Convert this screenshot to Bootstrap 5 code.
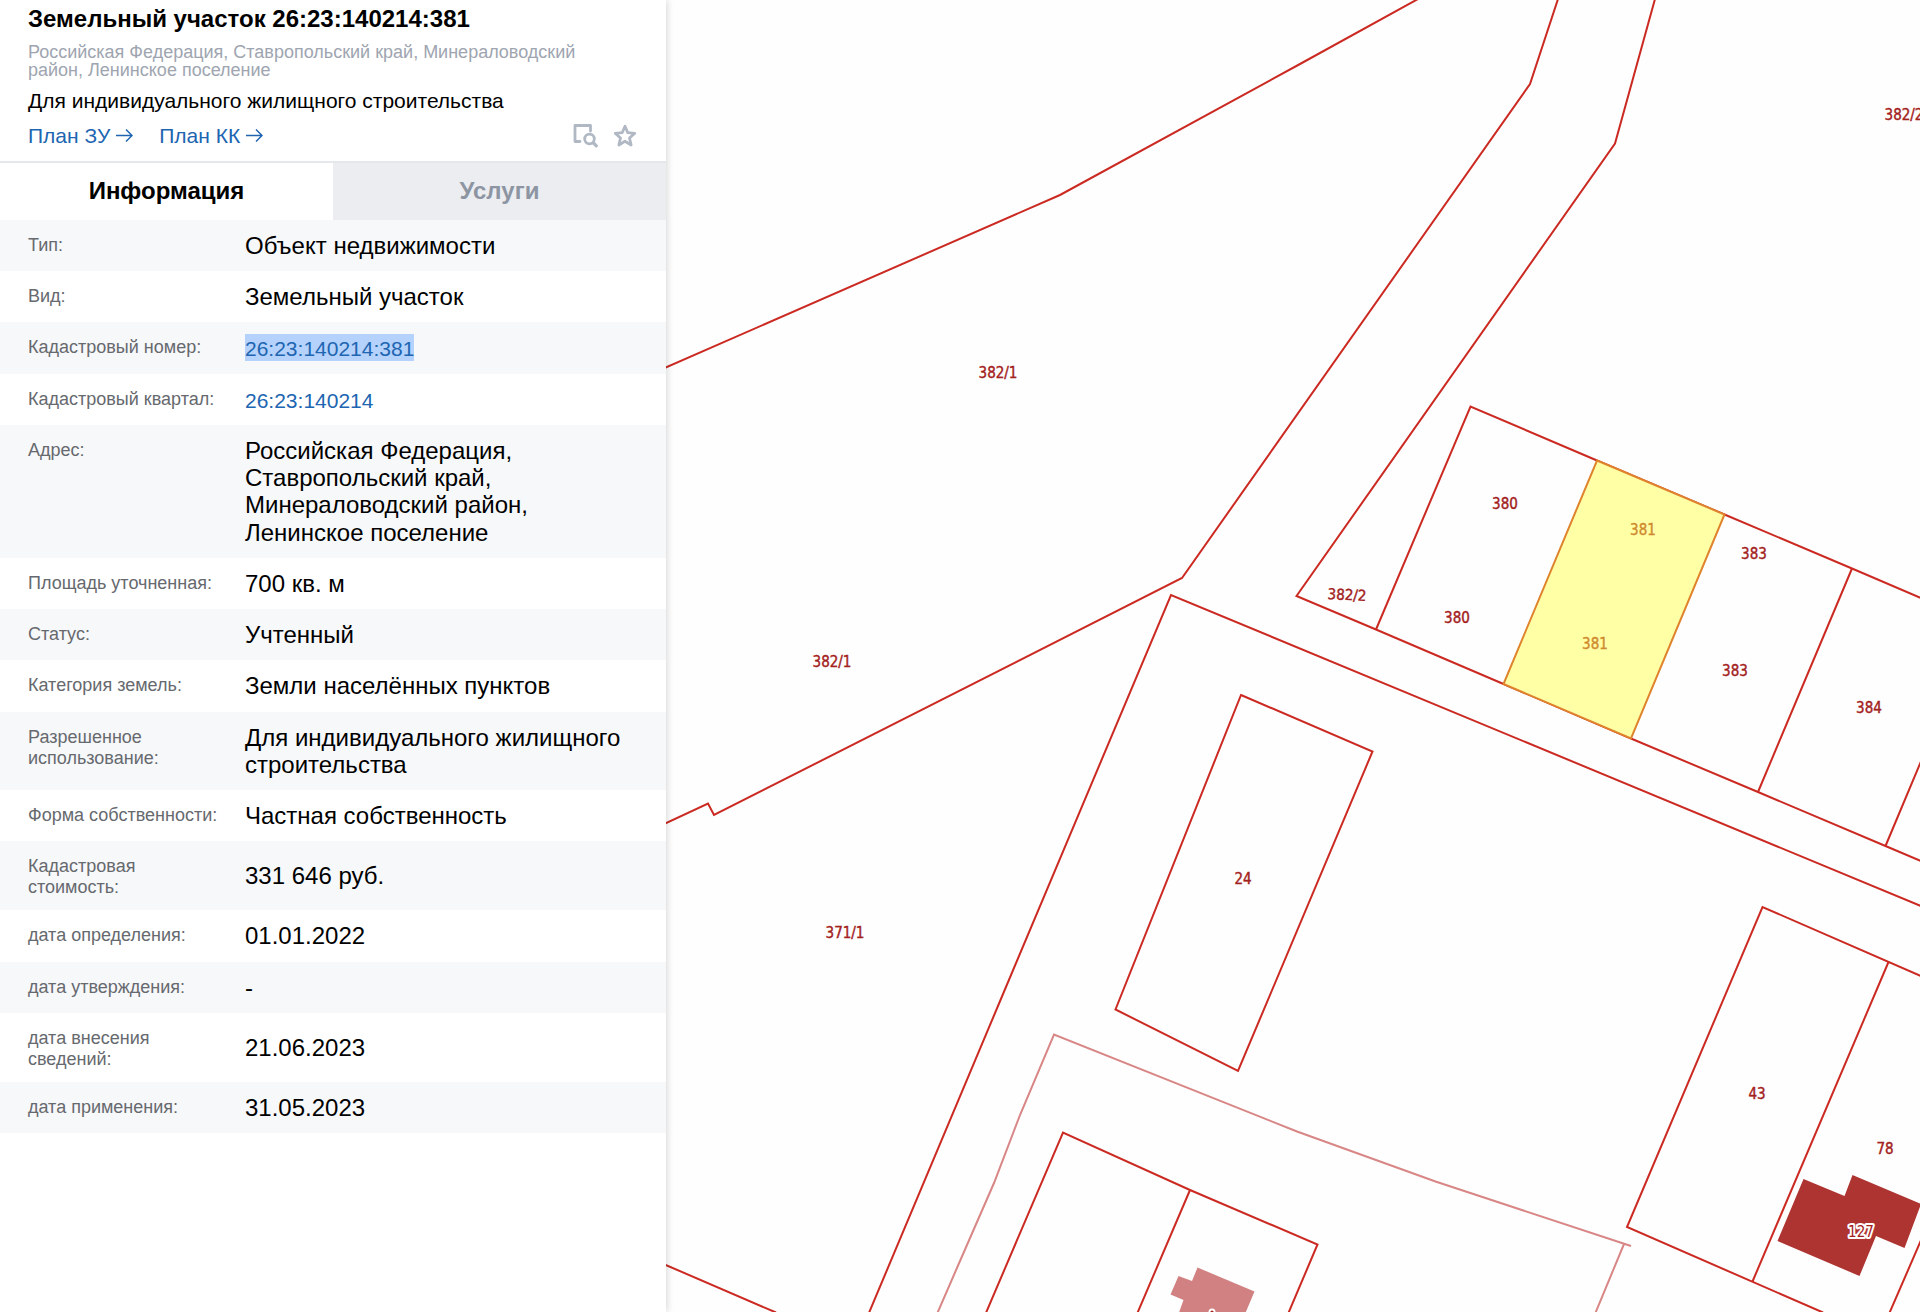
<!DOCTYPE html>
<html lang="ru">
<head>
<meta charset="utf-8">
<meta name="viewport" content="width=device-width, initial-scale=1">
<title>Земельный участок 26:23:140214:381</title>
<link href="https://cdn.jsdelivr.net/npm/bootstrap@5.3.0/dist/css/bootstrap.min.css" rel="stylesheet">
<style>
  body { font-family: "Liberation Sans", Arial, sans-serif; color: #000; background: #fefefe; }
  .info-panel { flex: 0 0 666px; background: #fff; box-shadow: 0 0 8px rgba(0, 0, 0, .2); z-index: 1; }
  .panel-head { padding: 5px 28px 12px; border-bottom: 2px solid #e4e7eb; }
  .panel-title { font-size: 24px; line-height: 28px; margin: 0 0 10px; }
  .panel-address { font-size: 18px; line-height: 18px; color: #9ea5b0; margin: 0 0 9px; padding-right: 40px; }
  .panel-usage { font-size: 21px; line-height: 26px; margin: 0 0 9px; }
  .panel-links { font-size: 21px; line-height: 26px; gap: 26px; }
  .panel-links a, .params a { color: #2065b1; text-decoration: none; }
  .panel-links a { display: flex; align-items: center; gap: 6px; }
  .panel-icons { gap: 15px; padding-right: 1px; color: #b0b8c4; }
  .panel-icons button { color: inherit; line-height: 0; }
  .panel-tabs button { flex: 1 1 50%; border: 0; background: #ebedf1; color: #8d95a3; font-weight: 700; font-size: 24px; line-height: 28px; padding: 14px 0 15px; }
  .panel-tabs button.active { background: #fff; color: #000; }
  .params { width: 100%; table-layout: fixed; }
  .params tr:nth-child(odd) { background: #f7f8fa; }
  .params th { width: 245px; padding: 15px 20px 12px 28px; font-weight: 400; font-size: 18px; line-height: 21px; color: #66696e; vertical-align: top; }
  .params td { padding: 12px 28px 12px 0; font-size: 24px; line-height: 1.135; vertical-align: middle; }
  .params a { font-size: 21px; }
  .params .picked { background: #b4d2fb; padding: 3px 0 1px; }
  .map-area { flex: 1 1 0; min-width: 0; overflow: hidden; }
  .map-area svg { display: block; width: 100%; height: 100%; }
  .bound { fill: none; stroke: #cb2a22; stroke-width: 2; }
  .faint { fill: none; stroke: #d98686; stroke-width: 2; }
  .num { font-family: "DejaVu Sans Condensed", "DejaVu Sans", sans-serif; font-size: 15px; fill: #a3211c; stroke: #a3211c; stroke-width: .4; text-anchor: middle; }
  .num-picked { fill: #cf8a2e; stroke: #cf8a2e; }
  .num-building { stroke: #fff; stroke-width: 4; stroke-linejoin: round; paint-order: stroke; }
</style>
<script src="https://cdn.jsdelivr.net/npm/bootstrap@5.3.0/dist/js/bootstrap.bundle.min.js"></script>
</head>
<body>
<div class="d-flex vh-100 overflow-hidden">
  <aside class="info-panel position-relative">
    <header class="panel-head">
      <h1 class="panel-title fw-bold">Земельный участок 26:23:140214:381</h1>
      <p class="panel-address">Российская Федерация, Ставропольский край, Минераловодский район, Ленинское поселение</p>
      <p class="panel-usage">Для индивидуального жилищного строительства</p>
      <div class="panel-links d-flex align-items-center">
        <a href="#">План ЗУ <svg width="17" height="16" viewBox="0 0 17 16" fill="none" stroke="currentColor" stroke-width="1.5"><path d="M0 7.500H16M10 1.500L16 7.500L10 13.500"/></svg></a>
        <a href="#">План КК <svg width="17" height="16" viewBox="0 0 17 16" fill="none" stroke="currentColor" stroke-width="1.5"><path d="M0 7.500H16M10 1.500L16 7.500L10 13.500"/></svg></a>
        <div class="panel-icons d-flex align-items-center ms-auto">
          <button type="button" class="btn p-0 border-0" aria-label="Поиск по участку"><svg width="25" height="24" viewBox="0 0 25 24" fill="none" stroke="currentColor" stroke-width="2.800" stroke-linecap="round" stroke-linejoin="round"><path d="M7 17.500H2V1.500H17.500V7"/><circle cx="16.500" cy="15" r="4.800" stroke-width="2.800"/><path d="M20.500 19L23.300 21.800" stroke-width="3.200"/></svg></button>
          <button type="button" class="btn p-0 border-0" aria-label="В избранное"><svg width="24" height="24" viewBox="0 0 24 24" fill="none" stroke="currentColor" stroke-width="2.800" stroke-linejoin="round"><path d="M12 2.200L14.800 8.700L21.800 9.300L16.500 14L18.100 21L12 17.300L5.900 21L7.500 14L2.200 9.300L9.200 8.700Z"/></svg></button>
        </div>
      </div>
    </header>
    <div class="panel-tabs d-flex" role="tablist">
      <button type="button" class="active" role="tab" aria-selected="true">Информация</button>
      <button type="button" role="tab" aria-selected="false">Услуги</button>
    </div>
    <table class="params">
      <tbody>
        <tr><th scope="row">Тип:</th><td>Объект недвижимости</td></tr>
        <tr><th scope="row">Вид:</th><td>Земельный участок</td></tr>
        <tr><th scope="row">Кадастровый номер:</th><td><a href="#" class="picked">26:23:140214:381</a></td></tr>
        <tr><th scope="row">Кадастровый квартал:</th><td><a href="#">26:23:140214</a></td></tr>
        <tr><th scope="row">Адрес:</th><td>Российская Федерация, Ставропольский край, Минераловодский район, Ленинское поселение</td></tr>
        <tr><th scope="row">Площадь уточненная:</th><td>700 кв. м</td></tr>
        <tr><th scope="row">Статус:</th><td>Учтенный</td></tr>
        <tr><th scope="row">Категория земель:</th><td>Земли населённых пунктов</td></tr>
        <tr><th scope="row">Разрешенное использование:</th><td>Для индивидуального жилищного строительства</td></tr>
        <tr><th scope="row">Форма собственности:</th><td>Частная собственность</td></tr>
        <tr><th scope="row">Кадастровая стоимость:</th><td>331 646 руб.</td></tr>
        <tr><th scope="row">дата определения:</th><td>01.01.2022</td></tr>
        <tr><th scope="row">дата утверждения:</th><td>-</td></tr>
        <tr><th scope="row">дата внесения сведений:</th><td>21.06.2023</td></tr>
        <tr><th scope="row">дата применения:</th><td>31.05.2023</td></tr>
      </tbody>
    </table>
  </aside>
  <main class="map-area">
    <svg viewBox="666 0 1254 1312" preserveAspectRatio="xMinYMin slice" role="img" aria-label="Кадастровая карта">
      <!-- roads and large parcels -->
      <g class="bound">
        <path d="M660 370L1060 195L1300 64L1418 -1"/>
        <path d="M1558 -1L1530 84L1182 578L714 815L708 803.500L660 826"/>
        <path d="M1655 -1L1615 143.500L1296.500 596L1376 629.500L1503.500 684L1631 738.500L1758 792L1885.500 846L1922 861.500"/>
        <path d="M1922 906.500L1171 595L1000.500 1000L868.500 1314"/>
        <path d="M660 1262.500L776 1312.500"/>
      </g>
      <!-- row of lots 380-384 -->
      <g class="bound">
        <path d="M1376 629.500L1470.500 406.500L1597 460.500L1724.500 514.500L1852 568.500L1922 598.500"/>
        <path d="M1852 568.500L1758 792M1885.500 846L1922 759"/>
      </g>
      <path d="M1597 460.500L1724.500 514.500L1631 738.500L1503.500 684Z" fill="#ffffa6" stroke="#df832c" stroke-width="2"/>
      <!-- lots 24, 43, 78 -->
      <g class="bound">
        <path d="M1241 695L1372.500 751.500L1238 1071L1115.500 1009.500Z"/>
        <path d="M1922 976.500L1762.500 907L1627 1227L1823 1312.500M1888.500 962L1752.500 1281.500M1922 1238L1889 1314"/>
        <path d="M985.500 1314L1063 1132.500L1190 1190L1317.500 1244.500L1288 1314M1190 1190L1137 1314"/>
      </g>
      <g class="faint">
        <path d="M937 1314L960 1261L994 1183L1020 1115L1054 1034.500L1297 1131.500L1435.500 1181.500L1631 1246M1624 1244L1595 1314"/>
      </g>
      <!-- buildings -->
      <path fill="#ae3431" d="M1803.500 1179L1844.500 1196L1852.500 1175L1921 1204L1904.500 1248L1876 1236L1859.500 1276L1777.500 1241Z"/>
      <path fill="#d28182" d="M1197.500 1267.500L1254.500 1291.500L1245 1314H1178.500L1183.500 1300L1170.500 1294.500L1178.500 1276L1192 1281Z"/>
      <circle cx="1212" cy="1312" r="3.500" fill="#fff"/><circle cx="1212" cy="1312" r="1.600" fill="#a3211c"/>
      <!-- parcel numbers -->
      <g class="num">
        <text x="998" y="378">382/1</text>
        <text x="832" y="667">382/1</text>
        <text x="845" y="938">371/1</text>
        <text x="1243" y="884">24</text>
        <text x="1505" y="509">380</text>
        <text x="1457" y="623">380</text>
        <text x="1754" y="559">383</text>
        <text x="1735" y="676">383</text>
        <text x="1869" y="713">384</text>
        <text x="1347" y="600" transform="rotate(3 1347 595)">382/2</text>
        <text x="1904" y="120">382/2</text>
        <text x="1757" y="1099">43</text>
        <text x="1885" y="1154">78</text>
        <text class="num-picked" x="1643" y="535">381</text>
        <text class="num-picked" x="1595" y="649">381</text>
        <text class="num-building" x="1861" y="1237">127</text>
      </g>
    </svg>
  </main>
</div>
</body>
</html>
